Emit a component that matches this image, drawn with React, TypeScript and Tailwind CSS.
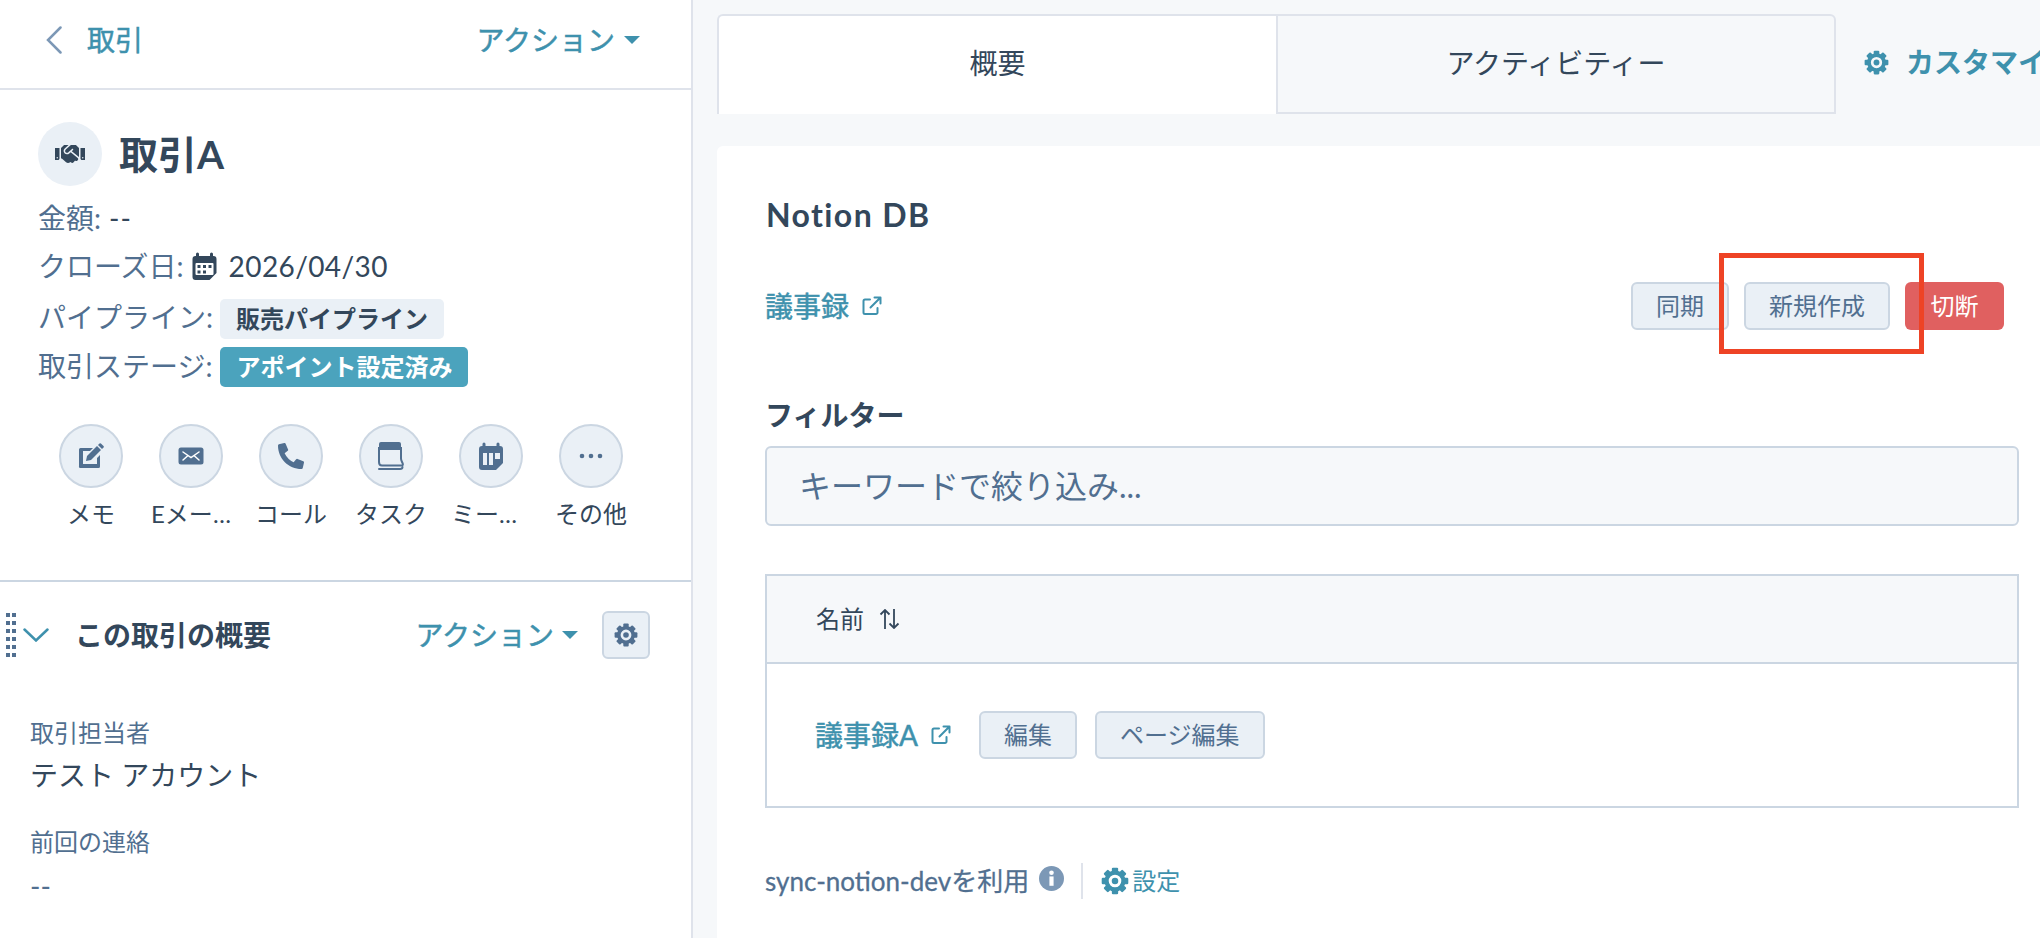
import React from "react";
import { FaHandshake, FaPhoneAlt } from "react-icons/fa";

function Gear({ className = "" }: { className?: string }) {
  const teeth = [0, 45, 90, 135, 180, 225, 270, 315];
  return (
    <svg viewBox="0 0 24 24" className={className} fill="currentColor">
      {teeth.map((a) => (
        <rect key={a} x="9.3" y="0.6" width="5.4" height="5" rx="1" transform={`rotate(${a} 12 12)`} />
      ))}
      <circle cx="12" cy="12" r="7.2" fill="none" stroke="currentColor" strokeWidth="3.6" />
      <circle cx="12" cy="12" r="2.8" />
    </svg>
  );
}

function Caret() {
  return (
    <svg viewBox="0 0 16 8" className="w-4 h-2 text-[#3e91ad]" fill="currentColor">
      <path d="M0 0h16L8 8z" />
    </svg>
  );
}

function ExternalIcon({ className = "" }: { className?: string }) {
  return (
    <svg viewBox="0 0 20 20" className={className} fill="none" stroke="currentColor" strokeWidth="2" strokeLinecap="round" strokeLinejoin="round">
      <path d="M8 3.5H3a1.5 1.5 0 0 0-1.5 1.5v11.5A1.5 1.5 0 0 0 3 18h11a1.5 1.5 0 0 0 1.5-1.5V12" />
      <path d="M8.5 11.5 18.5 1.5M12.5 1.5h6v6" />
    </svg>
  );
}

function Pencil() {
  return (
    <svg viewBox="0 0 26 26" className="w-[26px] h-[26px]" fill="#516f90">
      <path d="M2.5 5H15l-3 3H5v13h14v-6l3-3v11.5a1.5 1.5 0 0 1-1.5 1.5h-18A1.5 1.5 0 0 1 1 23V6.5A1.5 1.5 0 0 1 2.500 5z" />
      <path d="M9 13 19 3l4 4-10 10-5 1z" />
      <path d="M20 2l1.500-1.500a1 1 0 0 1 1.400 0l2.600 2.600a1 1 0 0 1 0 1.400L24 6z" />
    </svg>
  );
}

function Mail() {
  return (
    <svg viewBox="0 0 26 18" className="w-[26px] h-[18px]">
      <rect x="0.500" y="0.500" width="25" height="17" rx="2.500" fill="#516f90" />
      <path d="M5 5l8 5.500L21 5M5 13l4.500-4M21 13l-4.500-4" fill="none" stroke="#fff" strokeWidth="1.500" strokeLinecap="round" />
    </svg>
  );
}

function Task() {
  return (
    <svg viewBox="0 0 26 30" className="w-[26px] h-[30px]" fill="none">
      <path d="M1 9V3a2 2 0 0 1 2-2h18a2 2 0 0 1 2 2v6z" fill="#516f90" />
      <path d="M1 6v15c0 2 1 3.500 3 3.500h19.500c1.500 0 1.500-1 1.200-2-.7-2-1.700-3-1.700-5V6" stroke="#516f90" strokeWidth="2" />
      <path d="M1 28h21c1.500 0 2.500-.7 2.500-2" stroke="#516f90" strokeWidth="2" strokeLinecap="round" />
    </svg>
  );
}

function Meeting() {
  return (
    <svg viewBox="0 0 24 28" className="w-[24px] h-[28px]">
      <path d="M5 0.500a1.500 1.500 0 0 1 1.500 1.500v2h11V2a1.500 1.500 0 0 1 3 0v2H21a3 3 0 0 1 3 3v14l-7 7H3a3 3 0 0 1-3-3V7a3 3 0 0 1 3-3h.5V2A1.500 1.500 0 0 1 5 .5z" fill="#516f90" />
      <rect x="4" y="11" width="4" height="12" fill="#eaf0f6" />
      <rect x="10" y="11" width="4" height="12" fill="#eaf0f6" />
      <path d="M16 11h5v6h-5z" fill="#eaf0f6" />
    </svg>
  );
}

function Dots() {
  return (
    <svg viewBox="0 0 24 6" className="w-[24px] h-[6px]" fill="#516f90">
      <circle cx="3" cy="3" r="2.300" />
      <circle cx="12" cy="3" r="2.300" />
      <circle cx="21" cy="3" r="2.300" />
    </svg>
  );
}

function CalendarSmall() {
  return (
    <svg viewBox="0 0 24 28" className="w-[25px] h-[28px] ml-[8px] mr-[12px] shrink-0">
      <path d="M5 0.500a1.500 1.500 0 0 1 1.500 1.500v2h11V2a1.500 1.500 0 0 1 3 0v2H21a3 3 0 0 1 3 3v14l-7 7H3a3 3 0 0 1-3-3V7a3 3 0 0 1 3-3h.5V2A1.500 1.500 0 0 1 5 .5z" fill="#33475b" />
      <rect x="3" y="11" width="18" height="12" fill="#fff" rx="1" />
      <g fill="#33475b">
        <rect x="5" y="13" width="3" height="3" />
        <rect x="10.500" y="13" width="3" height="3" />
        <rect x="16" y="13" width="3" height="3" />
        <rect x="5" y="18.500" width="3" height="3" />
        <rect x="10.500" y="18.500" width="3" height="3" />
      </g>
    </svg>
  );
}

const actions: { label: string; icon: React.ReactNode }[] = [
  { label: "メモ", icon: <Pencil /> },
  { label: "Eメール", icon: <Mail /> },
  { label: "コール", icon: <FaPhoneAlt className="w-[26px] h-[26px] text-[#516f90]" /> },
  { label: "タスク", icon: <Task /> },
  { label: "ミーティング", icon: <Meeting /> },
  { label: "その他", icon: <Dots /> },
];

function Btn({ children }: { children: React.ReactNode }) {
  return (
    <button className="h-[48px] px-[23px] rounded-[6px] border-2 border-[#cbd6e2] bg-[#eaf0f6] text-[24px] text-[#516f90] leading-none whitespace-nowrap">
      {children}
    </button>
  );
}

export default function App() {
  return (
    <div className="w-[2040px] h-[938px] flex overflow-hidden bg-[#f6f8fa] text-[#33475b] font-['Lato','Noto_Sans_CJK_JP',sans-serif]">
      <aside className="w-[693px] shrink-0 bg-white border-r-2 border-[#dfe3eb] flex flex-col">
        <div className="h-[90px] shrink-0 border-b-2 border-[#dfe3eb] pl-[46px] pr-[51px] pb-[8px] flex items-center justify-between">
          <div className="flex items-center">
            <svg viewBox="0 0 16 28" className="w-[16px] h-[28px] text-[#7c98b6]" fill="none" stroke="currentColor" strokeWidth="2.500" strokeLinecap="round">
              <path d="M14.500 1.500 2 14l12.500 12.500" />
            </svg>
            <span className="ml-[25px] text-[28px] leading-[40px] [-webkit-text-stroke:0.5px_#3e91ad] text-[#3e91ad]">取引</span>
          </div>
          <div className="flex items-center gap-[9px]">
            <span className="text-[28px] leading-[40px] [-webkit-text-stroke:0.5px_#3e91ad] text-[#3e91ad]">アクション</span>
            <Caret />
          </div>
        </div>

        <div className="pl-[38px] pt-[32px]">
          <div className="flex items-center">
            <div className="w-[64px] h-[64px] rounded-full bg-[#eaf0f6] flex items-center justify-center">
              <FaHandshake className="w-[30px] h-[30px] text-[#33475b]" />
            </div>
            <h1 className="ml-[17px] text-[39px] leading-[50px] font-bold">取引A</h1>
          </div>
          <div className="mt-[8px] text-[28px] leading-[40px] flex flex-col">
            <div className="h-[48px] flex items-center">
              <span className="text-[#516f90]">金額:</span>
              <span className="ml-[8px] tracking-[1px]">--</span>
            </div>
            <div className="h-[48px] flex items-center">
              <span className="text-[#516f90]">クローズ日:</span>
              <CalendarSmall />
              <span className="tracking-[0.4px]">2026/04/30</span>
            </div>
            <div className="mt-[5px] h-[48px] flex items-center">
              <span className="text-[#516f90] mb-[4px]">パイプライン:</span>
              <span className="ml-[7px] h-[40px] w-[224px] rounded-[5px] bg-[#eaf0f6] flex items-center justify-center text-[24px] font-bold leading-none">販売パイプライン</span>
            </div>
            <div className="h-[48px] flex items-center">
              <span className="text-[#516f90] mb-[2px]">取引ステージ:</span>
              <span className="ml-[8px] h-[40px] w-[248px] rounded-[5px] bg-[#4ba3bd] flex items-center justify-center text-[24px] font-bold leading-none text-white">アポイント設定済み</span>
            </div>
          </div>
        </div>

        <div className="pl-[41px] pt-[33px] flex">
          {actions.map((a) => (
            <div key={a.label} className="w-[100px] flex flex-col items-center">
              <div className="w-[64px] h-[64px] rounded-full border-2 border-[#cbd6e2] bg-[#eaf0f6] flex items-center justify-center">
                {a.icon}
              </div>
              <div className="mt-[8px] w-[80px] h-[36px] text-[24px] leading-[36px] text-center truncate">{a.label}</div>
            </div>
          ))}
        </div>

        <div className="mt-[48px] border-t-2 border-[#cbd6e2] pt-[29px]">
          <div className="flex items-center pl-[6px] pr-[41px]">
            <div className="grid grid-cols-[4px_4px] gap-x-[2px] gap-y-[4px]">
              {Array.from({ length: 12 }).map((_, i) => (
                <div key={i} className="w-[4px] h-[4px] bg-[#516f90]" />
              ))}
            </div>
            <svg viewBox="0 0 26 14" className="ml-[7px] w-[26px] h-[14px] text-[#3e91ad]" fill="none" stroke="currentColor" strokeWidth="2.500" strokeLinecap="round">
              <path d="M1.500 1.500 13 12.500 24.500 1.500" />
            </svg>
            <span className="ml-[26px] text-[28px] leading-[40px] font-bold">この取引の概要</span>
            <div className="ml-auto flex items-center gap-[8px]">
              <span className="text-[28px] leading-[40px] [-webkit-text-stroke:0.5px_#3e91ad] text-[#3e91ad]">アクション</span>
              <Caret />
            </div>
            <button className="ml-[24px] w-[48px] h-[48px] rounded-[6px] border-2 border-[#cbd6e2] bg-[#eaf0f6] flex items-center justify-center text-[#516f90]">
              <Gear className="w-[24px] h-[24px]" />
            </button>
          </div>
          <div className="pl-[30px] pt-[56px]">
            <div className="text-[24px] leading-[36px] text-[#516f90]">取引担当者</div>
            <div className="mt-[4px] text-[28px] leading-[40px]">テスト アカウント</div>
            <div className="mt-[29px] text-[24px] leading-[36px] text-[#516f90]">前回の連絡</div>
            <div className="mt-[6px] text-[28px] leading-[40px] text-[#516f90]">--</div>
          </div>
        </div>
      </aside>

      <main className="flex-1 min-w-0 flex flex-col overflow-hidden">
        <div className="pt-[14px] pl-[24px] flex shrink-0 h-[114px]">
          <div className="w-[559px] shrink-0 h-[100px] bg-white border-t-2 border-l-2 border-[#dfe3eb] rounded-tl-[6px] flex items-center justify-center text-[28px] pb-[4px]">概要</div>
          <div className="w-[560px] shrink-0 h-[100px] border-2 border-[#dfe3eb] rounded-tr-[6px] flex items-center justify-center text-[28px] pb-[2px]">アクティビティー</div>
          <div className="ml-[28px] h-[96px] flex items-center whitespace-nowrap text-[#3e91ad] shrink-0">
            <Gear className="w-[25px] h-[25px]" />
            <span className="ml-[17px] text-[28px] font-bold">カスタマイズ</span>
          </div>
        </div>

        <div className="mt-[32px] ml-[24px] flex-1 bg-white rounded-tl-[6px] pl-[48px] pr-[21px] pt-[49px]">
          <h2 className="text-[32px] leading-[40px] font-bold pl-[1px] tracking-[1.4px]">Notion DB</h2>

          <div className="mt-[47px] flex items-center justify-between pr-[15px]">
            <div className="flex items-center text-[#3e91ad]">
              <span className="text-[28px] leading-[40px] [-webkit-text-stroke:0.5px_#3e91ad]">議事録</span>
              <ExternalIcon className="ml-[13px] w-[20px] h-[20px]" />
            </div>
            <div className="flex items-center gap-[15px]">
              <Btn>同期</Btn>
              <div className="relative">
                <Btn>新規作成</Btn>
                <div className="absolute z-10 left-[-25px] top-[-29px] right-[-34px] bottom-[-24px] border-[5px] border-[#ee4325] pointer-events-none" />
              </div>
              <button className="h-[48px] w-[99px] rounded-[6px] bg-[#e06060] text-[24px] text-white leading-none">切断</button>
            </div>
          </div>

          <div className="mt-[65px] text-[28px] leading-[40px] font-bold">フィルター</div>
          <div className="mt-[11px] h-[80px] rounded-[6px] border-2 border-[#cbd6e2] bg-[#f6f8fa] flex items-center pl-[32px] text-[32px] text-[#516f90]">キーワードで絞り込み...</div>

          <div className="mt-[48px] border-2 border-[#cbd6e2]">
            <div className="h-[88px] bg-[#f6f8fa] border-b-2 border-[#cbd6e2] flex items-center pl-[49px] text-[24px]">
              <span>名前</span>
              <svg viewBox="0 0 21 20" className="ml-[15px] w-[21px] h-[20px]" fill="none" stroke="currentColor" strokeWidth="1.800">
                <path d="M6 20V1M1.500 5.500 6 1l4.500 4.500M15 0v19M10.500 14.500 15 19l4.500-4.500" />
              </svg>
            </div>
            <div className="h-[142px] flex items-center pl-[48px]">
              <span className="text-[28px] leading-[40px] [-webkit-text-stroke:0.5px_#3e91ad] text-[#3e91ad]">議事録A</span>
              <ExternalIcon className="ml-[13px] w-[20px] h-[20px] text-[#3e91ad]" />
              <div className="ml-[28px] flex gap-[18px]">
                <Btn>編集</Btn>
                <Btn>ページ編集</Btn>
              </div>
            </div>
          </div>

          <div className="mt-[53px] h-[40px] flex items-center">
            <span className="text-[26px] text-[#516f90] [-webkit-text-stroke:0.3px_#516f90]">sync-notion-devを利用</span>
            <svg viewBox="0 0 24 24" className="ml-[10px] mb-[6px] w-[25px] h-[25px]">
              <circle cx="12" cy="12" r="12" fill="#7c98b6" />
              <rect x="10" y="10" width="4" height="9" fill="#fff" />
              <circle cx="12" cy="6.500" r="2.200" fill="#fff" />
            </svg>
            <div className="ml-[17px] w-[2px] h-[36px] bg-[#dfe3eb]" />
            <Gear className="ml-[18px] w-[28px] h-[28px] text-[#3e91ad]" />
            <span className="ml-[3px] text-[24px] text-[#3e91ad]">設定</span>
          </div>
        </div>
      </main>
    </div>
  );
}
